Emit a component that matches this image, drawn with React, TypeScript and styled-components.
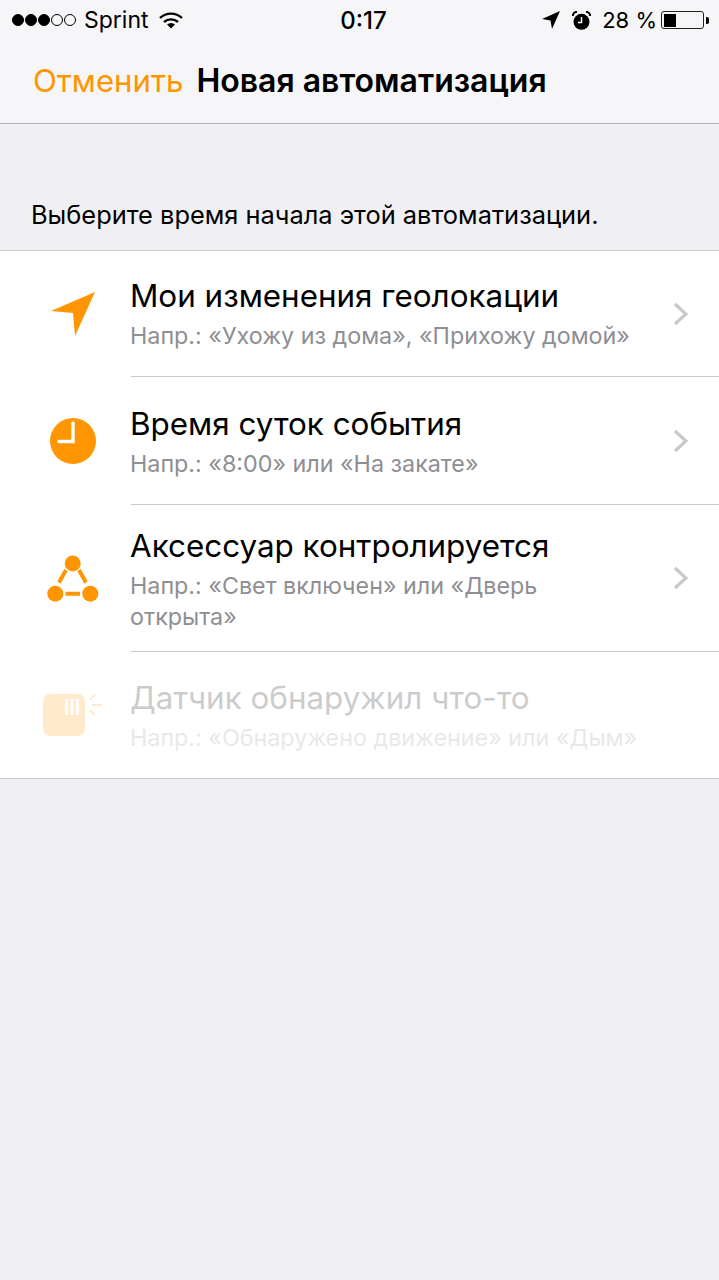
import styled, { createGlobalStyle } from "styled-components"

const orange = "#ff9500"

const GlobalStyle = createGlobalStyle`
    html, body {
        margin: 0;
        padding: 0;
        background: #efeff4;
        font-family: Inter, "Noto Sans", sans-serif;
    }
`

const Page = styled.div`
    width: 719px;
    height: 1280px;
    overflow: hidden;
    background: #efeff4;
`

const TopBar = styled.header`
    height: 123px;
    background: #f6f6f9;
    border-bottom: 1px solid #b2b2b2;
`

const StatusBar = styled.div`
    height: 40px;
    display: grid;
    grid-template-columns: 1fr auto 1fr;
    align-items: center;
    padding: 0 10px 0 12px;
    color: #000;
    font-size: 23px;
`

const StatusLeft = styled.div`
    display: flex;
    align-items: center;
`

const StatusRight = styled.div`
    display: flex;
    align-items: center;
    justify-content: flex-end;
`

const Signal = styled.div`
    display: flex;
    gap: 1px;
    margin-right: 8px;
`

const Dot = styled.span<{ $on: boolean }>`
    width: 12px;
    height: 12px;
    border-radius: 50%;
    box-sizing: border-box;
    border: 1px solid #000;
    background: ${({ $on }) => ($on ? "#000" : "transparent")};
`

const Carrier = styled.span`
    margin-right: 10px;
`

const Clock = styled.span`
    font-weight: 500;
    font-size: 24px;
    position: relative;
    left: 3px;
`

const Percent = styled.span`
    margin: 0 4px 0 11px;
    font-size: 22px;
`

const Battery = styled.div`
    width: 43px;
    height: 18px;
    box-sizing: border-box;
    border: 1.5px solid #222;
    border-radius: 3px;
    padding: 1.5px;
`

const BatteryLevel = styled.div`
    width: 12px;
    height: 100%;
    background: #000;
`

const BatteryNub = styled.div`
    width: 3px;
    height: 7px;
    margin-left: 2px;
    background: #000;
    border-radius: 0 2px 2px 0;
`

const NavRow = styled.div`
    height: 83px;
    display: flex;
    align-items: center;
    padding: 0 0 2px 33px;
    box-sizing: border-box;
`

const Cancel = styled.span`
    color: ${orange};
    font-size: 31.2px;
    margin-right: 13px;
`

const NavTitle = styled.span`
    color: #000;
    font-size: 32px;
    font-weight: 600;
`

const Hint = styled.p`
    margin: 0;
    height: 126px;
    box-sizing: border-box;
    padding: 77px 0 0 31px;
    font-size: 25.4px;
    line-height: 28px;
    color: #000;
`

const List = styled.ul`
    list-style: none;
    margin: 0;
    padding: 0;
    background: #fff;
    border-top: 1px solid #c8c7cc;
    border-bottom: 1px solid #c8c7cc;
`

const Row = styled.li<{ $height: number }>`
    display: flex;
    height: ${({ $height }) => $height}px;
`

const IconSlot = styled.div<{ $muted?: boolean }>`
    width: 131px;
    flex: none;
    padding-left: 15px;
    box-sizing: border-box;
    display: flex;
    align-items: center;
    justify-content: center;
    opacity: ${({ $muted }) => ($muted ? 0.35 : 1)};
`

const RowBody = styled.div<{ $last?: boolean }>`
    flex: 1;
    min-width: 0;
    display: flex;
    align-items: center;
    justify-content: space-between;
    padding-right: 31px;
    box-sizing: border-box;
    border-bottom: ${({ $last }) => ($last ? "none" : "1px solid #c8c7cc")};
`

const RowText = styled.div<{ $muted?: boolean; $shift: number }>`
    max-width: 512px;
    margin-left: -1px;
    position: relative;
    top: ${({ $shift }) => $shift}px;
    opacity: ${({ $muted }) => ($muted ? 0.2 : 1)};
`

const RowTitle = styled.div`
    font-size: 31.4px;
    line-height: 38px;
    color: #000;
    white-space: nowrap;
`

const RowSub = styled.div`
    margin-top: 5px;
    font-size: 23.3px;
    line-height: 31px;
    color: #8e8e93;
`

const StatusIcon = styled.span<{ $gap: number }>`
    display: flex;
    margin-right: ${({ $gap }) => $gap}px;
`

const Chevron = () => (
    <svg width="15" height="24" viewBox="0 0 15 24" fill="none" stroke="#c7c7cc" strokeWidth="3.2">
        <path d="M2 2 L13 12 L2 22" />
    </svg>
)

const ArrowIcon = () => (
    <svg width="46" height="46" viewBox="0 0 46 46" fill={orange}>
        <path d="M45 1 L1 20 L23 22 L25 45 Z" />
    </svg>
)

const ClockIcon = () => (
    <svg width="46" height="46" viewBox="0 0 46 46">
        <circle cx="23" cy="23" r="23" fill={orange} />
        <path d="M23 5 V23.5 H9" fill="none" stroke="#fff" strokeWidth="3.4" strokeLinecap="round" />
    </svg>
)

const AccessoryIcon = () => (
    <svg width="52" height="48" viewBox="0 0 52 48" fill={orange}>
        <circle cx="25.7" cy="8.4" r="8" />
        <circle cx="8.3" cy="38.7" r="8" />
        <circle cx="43.3" cy="38.7" r="8" />
        <path d="M19 15 L12 27.5 M32 15 L39 27.5 M18.5 38.7 H33" stroke={orange} strokeWidth="4" fill="none" />
    </svg>
)

const SensorIcon = () => (
    <svg width="60" height="46" viewBox="0 0 60 46">
        <rect x="0" y="2" width="42" height="42" rx="7" fill={orange} opacity="0.55" />
        <path d="M23.5 7 V23 M29 7 V23 M34.5 7 V23" stroke="#fff" strokeWidth="2.8" />
        <path d="M46.5 7.5 L52 3 M49 13 H59 M46.5 18 L52 23" stroke={orange} strokeWidth="1.8" opacity="0.55" />
    </svg>
)

const WifiIcon = () => (
    <svg width="24" height="17" viewBox="0 0 24 17" fill="none" stroke="#000" strokeWidth="2.4">
        <path d="M1 6 A16 16 0 0 1 23 6" />
        <path d="M5 10 A10.5 10.5 0 0 1 19 10" />
        <path d="M12 16.5 L8 12.6 A6 6 0 0 1 16 12.6 Z" fill="#000" stroke="none" />
    </svg>
)

const LocationIcon = () => (
    <svg width="18" height="18" viewBox="0 0 18 18" fill="#000">
        <path d="M18 0 L0 8 L8.5 9.5 L10 18 Z" />
    </svg>
)

const AlarmIcon = () => (
    <svg width="19" height="19" viewBox="0 0 19 19">
        <circle cx="9.5" cy="10.8" r="8" fill="#000" />
        <path d="M9.5 6 V11.5 H6" fill="none" stroke="#fff" strokeWidth="1.5" />
        <path d="M0.8 5 A4.5 4.5 0 0 1 5 0.8 M18.2 5 A4.5 4.5 0 0 0 14 0.8" fill="none" stroke="#000" strokeWidth="2" />
    </svg>
)

const rows = [
    {
        title: "Мои изменения геолокации",
        sub: "Напр.: «Ухожу из дома», «Прихожу домой»",
        height: 126,
        shift: 0,
        icon: <ArrowIcon />,
    },
    {
        title: "Время суток события",
        sub: "Напр.: «8:00» или «На закате»",
        height: 128,
        shift: 1,
        icon: <ClockIcon />,
    },
    {
        title: "Аксессуар контролируется",
        sub: "Напр.: «Свет включен» или «Дверь открыта»",
        height: 147,
        shift: 1,
        icon: <AccessoryIcon />,
    },
    {
        title: "Датчик обнаружил что-то",
        sub: "Напр.: «Обнаружено движение» или «Дым»",
        height: 126,
        shift: 1,
        icon: <SensorIcon />,
        muted: true,
    },
]

export default function App() {
    return (
        <Page>
            <GlobalStyle />
            <TopBar>
                <StatusBar>
                    <StatusLeft>
                        <Signal>
                            {[true, true, true, false, false].map((on, i) => (
                                <Dot key={i} $on={on} />
                            ))}
                        </Signal>
                        <Carrier>Sprint</Carrier>
                        <WifiIcon />
                    </StatusLeft>
                    <Clock>0:17</Clock>
                    <StatusRight>
                        <StatusIcon $gap={12}><LocationIcon /></StatusIcon>
                        <StatusIcon $gap={0}><AlarmIcon /></StatusIcon>
                        <Percent>28 %</Percent>
                        <Battery><BatteryLevel /></Battery>
                        <BatteryNub />
                    </StatusRight>
                </StatusBar>
                <NavRow>
                    <Cancel>Отменить</Cancel>
                    <NavTitle>Новая автоматизация</NavTitle>
                </NavRow>
            </TopBar>
            <Hint>Выберите время начала этой автоматизации.</Hint>
            <List>
                {rows.map((row, i) => (
                    <Row key={row.title} $height={row.height}>
                        <IconSlot $muted={row.muted}>{row.icon}</IconSlot>
                        <RowBody $last={i === rows.length - 1}>
                            <RowText $muted={row.muted} $shift={row.shift}>
                                <RowTitle>{row.title}</RowTitle>
                                <RowSub>{row.sub}</RowSub>
                            </RowText>
                            {!row.muted && <Chevron />}
                        </RowBody>
                    </Row>
                ))}
            </List>
        </Page>
    )
}
